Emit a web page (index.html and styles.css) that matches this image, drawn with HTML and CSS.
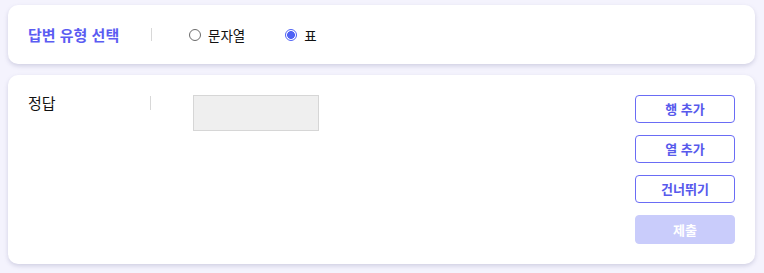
FILE: index.html
```html
<!DOCTYPE html>
<html lang="ko">
<head>
<meta charset="utf-8">
<link rel="stylesheet" href="styles.css">
</head>
<body>
<div class="page">
  <section class="card type-card">
    <h2 class="title">답변 유형 선택</h2>
    <span class="divider"></span>
    <div class="radios">
      <label class="radio"><span class="dot"></span>문자열</label>
      <label class="radio checked"><span class="dot"></span>표</label>
    </div>
  </section>
  <section class="card answer-card">
    <div class="label">정답</div>
    <span class="divider tall"></span>
    <div class="content"><div class="cell"></div></div>
    <div class="actions">
      <button class="btn">행 추가</button>
      <button class="btn">열 추가</button>
      <button class="btn">건너뛰기</button>
      <button class="btn disabled">제출</button>
    </div>
  </section>
</div>
</body>
</html>
```
FILE: styles.css
```css
html, body { margin: 0; padding: 0; }
* { box-sizing: border-box; }
body {
  background: #f4f3fd;
  font-family: "Noto Sans CJK KR", "Noto Sans", sans-serif;
  color: #111;
}
.page {
  padding: 5px 9px 8px 8px;
  display: flex;
  flex-direction: column;
  gap: 11px;
}
.card {
  background: #fff;
  border-radius: 10px;
  box-shadow: 0 2px 4px rgba(120, 120, 160, 0.28);
  display: flex;
}
.type-card {
  height: 59px;
  align-items: center;
  padding: 0 20px;
}
.title {
  margin: 0;
  font-size: 15px;
  font-weight: 700;
  color: #5b5cf2;
  width: 123px;
  line-height: 20px;
}
.divider {
  width: 1px;
  height: 13px;
  background: #d8d8d8;
}
.radios {
  display: flex;
  gap: 40px;
  margin-left: 37px;
}
.radio {
  display: flex;
  align-items: center;
  gap: 7px;
  font-size: 13.5px;
  line-height: 18px;
}
.dot {
  width: 12px;
  height: 12px;
  border: 1px solid #6b6b6b;
  border-radius: 50%;
}
.checked .dot {
  border-color: #4f62f5;
  background: radial-gradient(circle, #4f62f5 0 3.6px, #fff 4.2px);
}
.answer-card {
  height: 189px;
  padding: 20px 20px 0 20px;
  align-items: flex-start;
}
.label {
  width: 122px;
  font-size: 15px;
  line-height: 18px;
  margin-top: -1px;
}
.divider.tall {
  height: 14px;
  margin-top: 1px;
}
.content {
  flex: 1;
  padding-left: 42px;
}
.cell {
  width: 126px;
  height: 36px;
  background: #efefef;
  border: 1px solid #d6d6d6;
}
.actions {
  display: flex;
  flex-direction: column;
  gap: 12px;
}
.btn {
  width: 100px;
  height: 28px;
  border: 1px solid #6a6cf5;
  border-radius: 4px;
  background: #fff;
  color: #5759ec;
  font-family: inherit;
  font-size: 13px;
  font-weight: 700;
  padding: 0;
  line-height: 26px;
}
.btn.disabled {
  background: #c9ccfb;
  border-color: #c9ccfb;
  color: #fff;
  height: 29px;
}
```
